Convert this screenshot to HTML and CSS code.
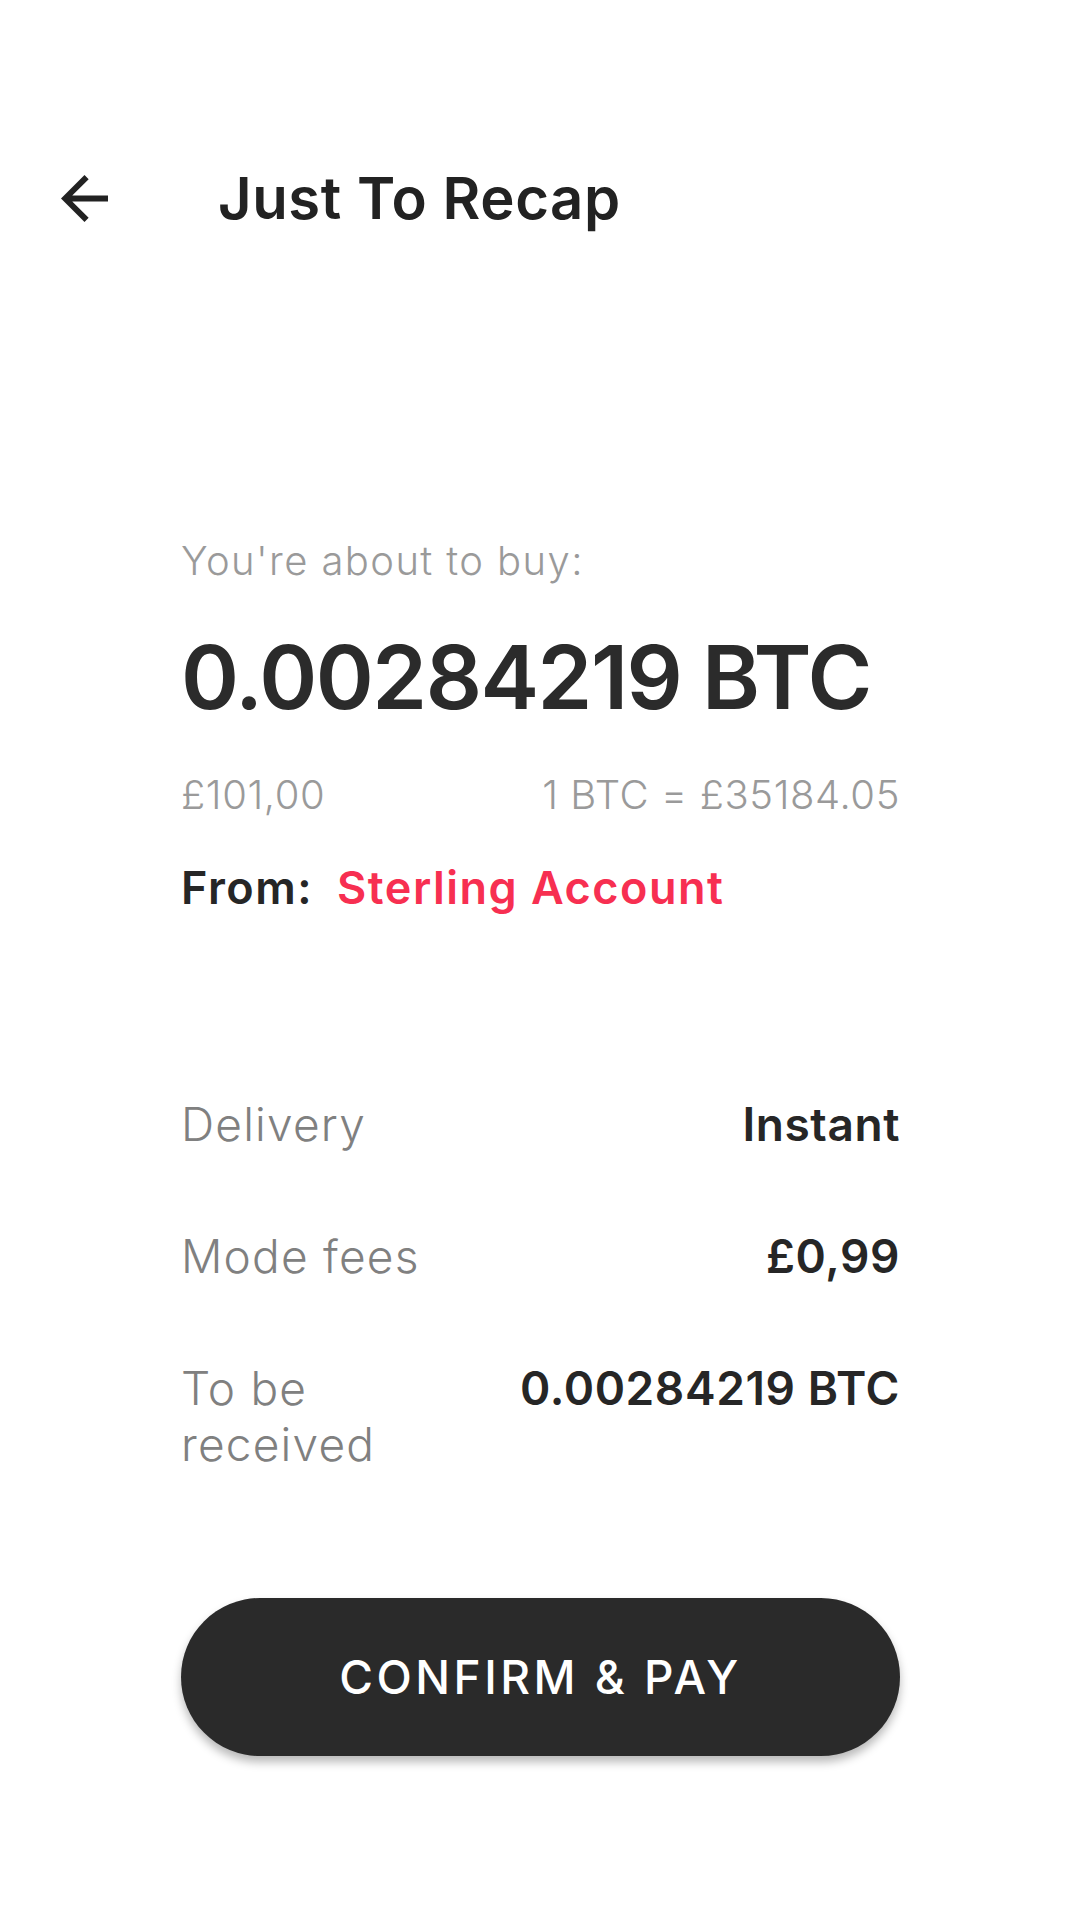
FILE: index.html
```html
<!DOCTYPE html>
<html>
<head>
<meta charset="utf-8">
<link rel="stylesheet" href="styles.css">
</head>
<body>
<div class="screen">
  <header class="topbar">
    <svg class="back" width="47" height="47" viewBox="4 4 16 16">
      <path fill="#222" d="M20 11H7.83l5.59-5.59L12 4l-8 8 8 8 1.41-1.41L7.83 13H20v-2z"/>
    </svg>
    <h1 class="title">Just To Recap</h1>
  </header>
  <main class="content">
    <p class="intro">You're about to buy:</p>
    <p class="amount">0.00284219 BTC</p>
    <div class="rate-row">
      <span>£101,00</span>
      <span>1 BTC = £35184.05</span>
    </div>
    <p class="from"><span class="from-label">From:</span><span class="from-acct">Sterling Account</span></p>
    <div class="details">
      <div class="detail-row"><span class="label">Delivery</span><span class="value">Instant</span></div>
      <div class="detail-row"><span class="label">Mode fees</span><span class="value">£0,99</span></div>
      <div class="detail-row"><span class="label">To be received</span><span class="value">0.00284219 BTC</span></div>
    </div>
    <button class="confirm">CONFIRM &amp; PAY</button>
  </main>
</div>
</body>
</html>
```
FILE: styles.css
```css
* { box-sizing: border-box; }
html, body { margin: 0; padding: 0; background: #fff; }
body { font-family: "Inter", "Liberation Sans", sans-serif; color: #262626; }
.screen { width: 1080px; height: 1920px; padding-top: 158px; overflow: hidden; }

.topbar {
  display: flex;
  align-items: center;
  height: 80px;
  padding-left: 61px;
}
.back { flex: 0 0 auto; display: block; }
.title {
  margin: 0 0 0 110px;
  font-size: 58px;
  font-weight: 600;
  line-height: 80px;
  letter-spacing: 0.6px;
  color: #222;
}

.content { padding: 0 180px 0 181px; }
.intro {
  margin: 298px 0 0;
  font-size: 40px;
  line-height: 50px;
  font-weight: 300;
  letter-spacing: 1.4px;
  color: #9a9a9a;
}
.amount {
  margin: 36px 0 0;
  font-size: 88px;
  line-height: 110px;
  font-weight: 600;
  letter-spacing: -1.5px;
  color: #2b2b2b;
}
.rate-row {
  margin-top: 38px;
  display: flex;
  justify-content: space-between;
  font-size: 40px;
  line-height: 50px;
  font-weight: 300;
  letter-spacing: 0.6px;
  color: #9a9a9a;
}
.from {
  margin: 40px 0 0;
  font-size: 45px;
  line-height: 56px;
  font-weight: 600;
  letter-spacing: 1.5px;
}
.from-label { color: #262626; margin-right: 24px; }
.from-acct { color: #f72f51; }

.details { margin-top: 180px; display: flex; flex-direction: column; gap: 76px; }
.detail-row {
  display: flex;
  justify-content: space-between;
  align-items: flex-start;
  font-size: 46px;
  line-height: 56px;
}
.label { width: 36%; color: #808080; font-weight: 300; letter-spacing: 1.2px; }
.value { color: #262626; font-weight: 600; text-align: right; letter-spacing: 0.6px; }

.confirm {
  display: block;
  width: 100%;
  height: 158px;
  margin-top: 126px;
  border: none;
  border-radius: 79px;
  background: #2a2a2a;
  color: #fff;
  font-family: "Inter", "Liberation Sans", sans-serif;
  font-size: 46px;
  font-weight: 500;
  letter-spacing: 3.5px;
  box-shadow: 0 6px 10px rgba(0,0,0,0.28);
}
```
